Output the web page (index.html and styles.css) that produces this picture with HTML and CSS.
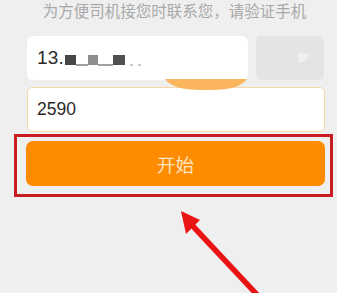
FILE: index.html
```html
<!DOCTYPE html>
<html lang="zh">
<head>
<meta charset="utf-8">
<link rel="stylesheet" href="styles.css">
</head>
<body>
<div class="page">
  <p class="hint">为方便司机接您时联系您，请验证手机</p>
  <div class="row">
    <div class="phone">
      <span class="num">13.</span><span class="blk b1"></span><span class="dash d1"></span><span class="blk b2"></span><span class="dash d2"></span><span class="blk b3"></span><span class="dot"></span><span class="dot"></span>
    </div>
    <div class="send"><span class="send-ico"></span></div>
  </div>
  <div class="code">2590</div>
  <div class="frame">
    <button class="start">开始</button>
  </div>
  <svg class="bowl" width="82" height="12" viewBox="0 0 82 12"><path d="M0 0 L82 0 Q74 11 46 11 L36 11 Q8 11 0 0 Z" fill="#fbb55c"/></svg>
  <svg class="arrow" width="337" height="293" viewBox="0 0 337 293">
    <line x1="262" y1="300" x2="189" y2="222" stroke="#ea1313" stroke-width="5.5"/>
    <polygon points="181,211 200,220 186,234" fill="#ea1313"/>
  </svg>
</div>
</body>
</html>
```
FILE: styles.css
```css
html, body {
  margin: 0;
  padding: 0;
  background: #efefef;
}
body {
  font-family: "Liberation Sans", "Noto Sans CJK SC", sans-serif;
  width: 337px;
  height: 293px;
  overflow: hidden;
}
.page {
  position: relative;
  padding: 0 12px 0 27px;
  height: 293px;
}
.hint {
  margin: 0;
  padding-top: 1px;
  height: 21px;
  line-height: 21px;
  font-size: 15.5px;
  color: #a9a9a9;
  text-align: center;
  white-space: nowrap;
  margin-left: -3px;
}
.row {
  display: flex;
  gap: 8px;
  margin-top: 14px;
}
.phone {
  width: 221px;
  height: 44px;
  background: #fff;
  border-radius: 6px;
  display: flex;
  align-items: center;
  padding-left: 10px;
  box-sizing: border-box;
}
.num {
  font-size: 19px;
  color: #2a2a2a;
  letter-spacing: 0.2px;
}
.blk {
  display: inline-block;
  height: 10px;
  margin-top: 3px;
}
.b1 { width: 11px; background: #474747; margin-left: 1px; }
.b2 { width: 10px; background: #8e8e8e; }
.b3 { width: 12px; background: #505050; }
.dash {
  display: inline-block;
  height: 2px;
  margin-top: 13px;
  background: #a0a0a0;
}
.d1 { width: 12px; }
.d2 { width: 15px; }
.dot {
  display: inline-block;
  width: 3px;
  height: 2px;
  margin: 13px 0 0 5px;
  background: #c9c9c9;
}
.send {
  width: 68px;
  height: 44px;
  background: #e4e4e4;
  border-radius: 5px;
  position: relative;
}
.send-ico {
  position: absolute;
  left: 42px;
  top: 17px;
  width: 10px;
  height: 9px;
  background: #efefef;
  clip-path: polygon(0 0, 100% 0, 100% 60%, 60% 100%, 0 100%);
}
.code {
  margin-top: 7px;
  height: 45px;
  box-sizing: border-box;
  background: #fff;
  border: 1px solid #f6d8a6;
  border-radius: 5px;
  font-size: 17.5px;
  color: #2a2a2a;
  line-height: 43px;
  padding-left: 9px;
}
.frame {
  margin: 2px -8px 0 -13px;
  border: 3px solid #c91d22;
  padding: 4px 5px 8px 9px;
}
.start {
  display: block;
  width: 100%;
  height: 45px;
  border: none;
  border-radius: 7px;
  background: #ff8b00;
  color: #fde6c2;
  font-family: "Noto Sans CJK SC", sans-serif;
  font-size: 18.5px;
  padding: 0;
}
.bowl {
  position: absolute;
  left: 165px;
  top: 79px;
}
.arrow {
  position: absolute;
  left: 0;
  top: 0;
}
```
